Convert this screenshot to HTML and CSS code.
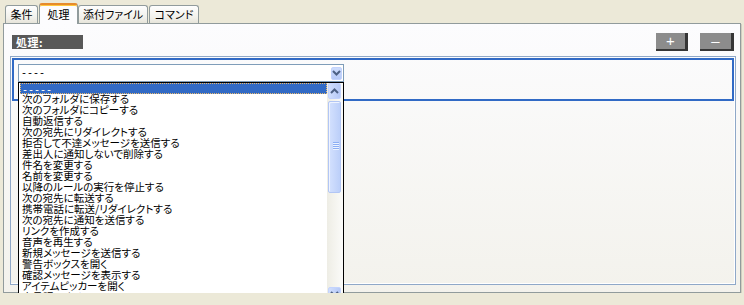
FILE: index.html
```html
<!DOCTYPE html>
<html lang="ja">

<head>
    <meta charset="UTF-8">
    <meta name="viewport" content="width=device-width, initial-scale=1.0">
    <title>ルール</title>
    <link rel="stylesheet" href="styles.css">
</head>

<body>
    <div class="tabs">
        <div class="tab tab-cond">条件</div>
        <div class="tab tab-action active">処理</div>
        <div class="tab tab-attach">添付ファイル</div>
        <div class="tab tab-cmd">コマンド</div>
    </div>

    <div class="panel">
        <div class="head">
            <div class="label">処理:</div>
            <div class="btns">
                <button class="btn btn-add">+</button>
                <button class="btn btn-del">–</button>
            </div>
        </div>

        <div class="box">
            <div class="rule">
                <div class="combo">
                    <div class="select">
                        <span class="dash">----</span>
                        <span class="drop">
                            <svg width="9" height="6" viewBox="0 0 9 6"><polyline points="1,1 4.5,4.5 8,1" fill="none" stroke="#4d6185" stroke-width="2"/></svg>
                        </span>
                    </div>

                    <div class="list">
                        <ul class="items">
                            <li class="selected"><span class="dash">-----</span></li>
                            <li>次のフォルダに保存する</li>
                            <li>次のフォルダにコピーする</li>
                            <li>自動返信する</li>
                            <li>次の宛先にリダイレクトする</li>
                            <li>拒否して不達メッセージを送信する</li>
                            <li>差出人に通知しないで削除する</li>
                            <li>件名を変更する</li>
                            <li>名前を変更する</li>
                            <li>以降のルールの実行を停止する</li>
                            <li>次の宛先に転送する</li>
                            <li>携帯電話に転送/リダイレクトする</li>
                            <li>次の宛先に通知を送信する</li>
                            <li>リンクを作成する</li>
                            <li>音声を再生する</li>
                            <li>新規メッセージを送信する</li>
                            <li>警告ボックスを開く</li>
                            <li>確認メッセージを表示する</li>
                            <li>アイテムピッカーを開く</li>
                            <li>未承認にする</li>
                        </ul>
                        <div class="scroll">
                            <div class="sbtn">
                                <svg width="9" height="6" viewBox="0 0 9 6"><polyline points="1,5 4.5,1.5 8,5" fill="none" stroke="#4d6185" stroke-width="2"/></svg>
                            </div>
                            <div class="thumb"></div>
                            <div class="sbtn sbtn-down">
                                <svg width="9" height="6" viewBox="0 0 9 6"><polyline points="1,1 4.5,4.5 8,1" fill="none" stroke="#4d6185" stroke-width="2"/></svg>
                            </div>
                        </div>
                    </div>
                </div>
            </div>
        </div>
    </div>
</body>

</html>
```

FILE: styles.css
```css
body {
    margin: 0;
    background-color: #ece9d8;
    font-family: "Noto Sans CJK JP", sans-serif;
    font-feature-settings: "palt";
    font-size: 11px;
    color: #000;
}

/* tabs */
.tabs {
    display: flex;
    align-items: flex-end;
    height: 23px;
    padding-left: 5px;
}

.tab {
    box-sizing: border-box;
    height: 18px;
    line-height: 16px;
    text-align: center;
    border: 1px solid #919b9c;
    border-bottom: none;
    border-radius: 3px 3px 0 0;
    background: linear-gradient(#fefefe, #f1f0ea 70%, #e6e4da);
    margin-right: 1px;
}

.tab-cond {
    width: 33px;
}

.tab-action {
    width: 39px;
}

.tab-attach {
    width: 70px;
}

.tab-cmd {
    width: 50px;
}

.tab.active {
    position: relative;
    z-index: 1;
    height: 21px;
    margin-bottom: -1px;
    line-height: 18px;
    background: #fcfcfe;
    border-top: 2px solid #e68b2c;
    box-shadow: inset 0 1px 0 #ffc73c;
    margin-right: 0;
}

/* panel */
.panel {
    box-sizing: border-box;
    height: 270px;
    margin: 0 3px;
    padding: 9px 4px 7px 6px;
    border: 1px solid #919b9c;
    background: linear-gradient(#fcfcfe, #f3f2ec);
    box-shadow: 1px 1px 0 #d0cebf;
    display: flex;
    flex-direction: column;
}

.head {
    display: flex;
    align-items: center;
    justify-content: space-between;
    height: 18px;
    padding: 0 2px;
    margin-bottom: 5px;
}

.label {
    width: 71px;
    height: 14px;
    box-sizing: border-box;
    padding-left: 4px;
    line-height: 14px;
    background-color: #585858;
    color: #fff;
    font-weight: bold;
    letter-spacing: 0.5px;
}

.btns {
    display: flex;
    gap: 12px;
}

.btn {
    box-sizing: border-box;
    width: 32px;
    height: 18px;
    padding: 0 0 1px 0;
    border: none;
    border-right: 3px solid #363636;
    border-bottom: 2px solid #363636;
    background-color: #8c8c8c;
    color: #fff;
    font-family: "Liberation Sans", sans-serif;
    font-size: 15px;
    line-height: 15px;
    cursor: pointer;
}

.btn-del {
    width: 34px;
}

.box {
    flex: 1;
    border: 1px solid #8fa8c8;
    padding: 1px;
    box-shadow: inset -1px -1px 0 #fff;
}

.rule {
    box-sizing: border-box;
    height: 43px;
    border: 2px solid #316ac5;
    padding: 4px 0 17px 4px;
}

/* combo box */
.combo {
    position: relative;
    width: 326px;
}

.select {
    box-sizing: border-box;
    height: 18px;
    border: 1px solid #7f9db9;
    background-color: #fff;
    padding-left: 2px;
    display: flex;
    align-items: center;
}

.dash {
    font-family: "Liberation Mono", monospace;
    font-size: 10px;
}

.drop {
    box-sizing: border-box;
    width: 11px;
    height: 13px;
    margin-left: auto;
    margin-right: 1px;
    border: 1px solid #c3d3fd;
    border-radius: 2px;
    background: linear-gradient(#cddcfd, #b6c9f7);
    display: flex;
    align-items: center;
    justify-content: center;
}

.list {
    position: absolute;
    z-index: 2;
    top: 18px;
    left: 0;
    box-sizing: border-box;
    width: 326px;
    height: 220px;
    border: 1px solid #000;
    background-color: #fff;
    display: flex;
}

.items {
    flex: 1;
    list-style: none;
    margin: 0;
    padding: 0 0 0 1px;
    overflow: hidden;
}

.items li {
    height: 11px;
    line-height: 9px;
    padding-left: 2px;
    font-size: 10.5px;
    white-space: nowrap;
}

.items li.selected {
    line-height: 11px;
    background-color: #316ac5;
    color: #fff;
    outline: 1px dotted #e9b96e;
    outline-offset: -1px;
}

/* scrollbar */
.scroll {
    width: 16px;
    box-sizing: border-box;
    padding: 0 2px 0 1px;
    background: linear-gradient(to right, #eeede5, #fbfbf9);
    display: flex;
    flex-direction: column;
}

.sbtn {
    box-sizing: border-box;
    height: 16px;
    border: 1px solid #c3d3fd;
    border-radius: 2px;
    background: linear-gradient(to right, #d0defd, #b6c9f7);
    display: flex;
    align-items: center;
    justify-content: center;
}

.sbtn-down {
    height: 14px;
    margin-top: auto;
}

.thumb {
    position: relative;
    box-sizing: border-box;
    height: 92px;
    margin-top: 2px;
    border: 1px solid #b2c6f5;
    border-radius: 2px;
    background: linear-gradient(to right, #d4e1fe, #bccff9);
    box-shadow: inset 1px 1px 0 #eef3ff;
}

.thumb::after {
    content: "";
    position: absolute;
    left: 4px;
    top: 40px;
    width: 6px;
    height: 8px;
    background: repeating-linear-gradient(#8caef5 0 1px, #eef4fe 1px 2px);
}
```
